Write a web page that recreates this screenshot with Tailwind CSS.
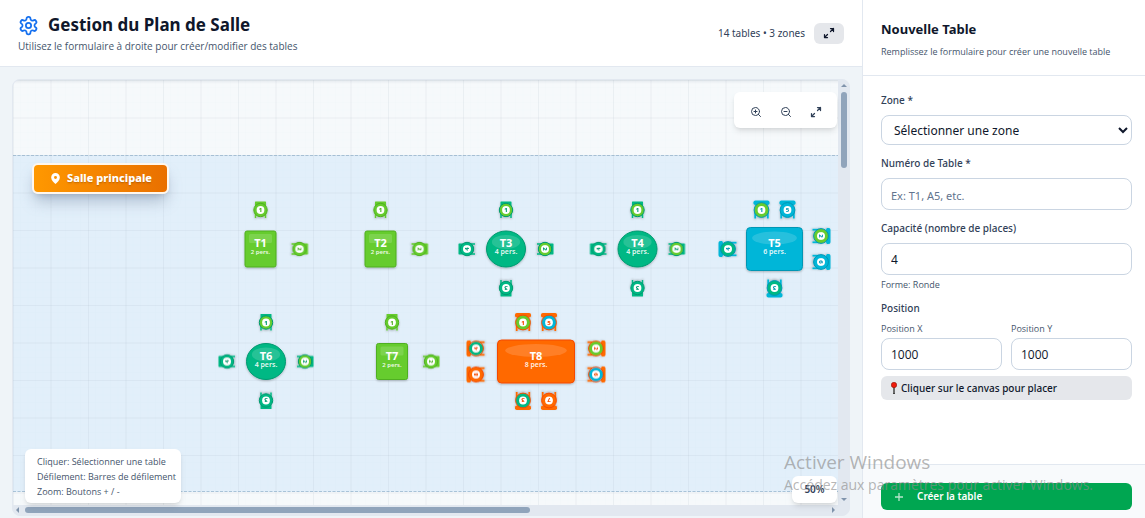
<!DOCTYPE html>
<html lang="fr">
<head>
<meta charset="utf-8">
<meta name="viewport" content="width=device-width, initial-scale=1">
<title>Gestion du Plan de Salle</title>
<script src="https://cdn.jsdelivr.net/npm/@tailwindcss/browser@4"></script>
</head>
<body class="h-screen overflow-hidden bg-white font-['Noto_Sans','Open_Sans',sans-serif] text-slate-900">
<div class="flex h-full">
  <main class="flex min-w-0 flex-1 flex-col bg-[#eff4f8]">
    <header class="flex h-[67px] shrink-0 items-center justify-between border-b border-slate-200 bg-white pr-[18px] pl-[18px]">
      <div class="pt-[2px]">
        <h1 class="flex items-center gap-[9px] text-[17px] leading-6 font-bold">
          <svg class="size-[21px] text-[#1570ef]" viewBox="0 0 24 24" fill="none" stroke="currentColor" stroke-width="2" stroke-linecap="round" stroke-linejoin="round"><path d="M12.22 2h-.44a2 2 0 0 0-2 2v.18a2 2 0 0 1-1 1.73l-.43.25a2 2 0 0 1-2 0l-.15-.08a2 2 0 0 0-2.73.73l-.22.38a2 2 0 0 0 .73 2.73l.15.1a2 2 0 0 1 1 1.72v.51a2 2 0 0 1-1 1.74l-.15.09a2 2 0 0 0-.73 2.73l.22.38a2 2 0 0 0 2.73.73l.15-.08a2 2 0 0 1 2 0l.43.25a2 2 0 0 1 1 1.73V20a2 2 0 0 0 2 2h.44a2 2 0 0 0 2-2v-.18a2 2 0 0 1 1-1.73l.43-.25a2 2 0 0 1 2 0l.15.08a2 2 0 0 0 2.73-.73l.22-.39a2 2 0 0 0-.73-2.73l-.15-.08a2 2 0 0 1-1-1.74v-.5a2 2 0 0 1 1-1.74l.15-.09a2 2 0 0 0 .73-2.73l-.22-.38a2 2 0 0 0-2.73-.73l-.15.08a2 2 0 0 1-2 0l-.43-.25a2 2 0 0 1-1-1.73V4a2 2 0 0 0-2-2z"/><circle cx="12" cy="12" r="3"/></svg>
          Gestion du Plan de Salle
        </h1>
        <p class="font-['Open_Sans',sans-serif] text-[10px] leading-[18px] text-slate-600">Utilisez le formulaire à droite pour créer/modifier des tables</p>
      </div>
      <div class="flex items-center gap-[9px]">
        <span class="text-[10px] text-slate-700">14 tables • 3 zones</span>
        <button type="button" aria-label="Plein écran" class="flex h-[21px] w-[30px] items-center justify-center rounded-md bg-gray-200">
          <svg class="size-3" viewBox="0 0 24 24" fill="none" stroke="currentColor" stroke-width="2.500" stroke-linecap="round" stroke-linejoin="round"><path d="m15 9 6-6M15 3h6v6M9 15l-6 6M9 21H3v-6"/></svg>
        </button>
      </div>
    </header>

    <div class="flex min-h-0 flex-1 flex-col pt-3 pr-3 pb-[2px] pl-3">
      <section class="relative grid min-h-0 flex-1 grid-cols-[minmax(0,1fr)_11px] grid-rows-[minmax(0,1fr)_10px] overflow-hidden rounded-lg border border-slate-200 bg-slate-200">
        <div class="relative overflow-hidden bg-[#f6f9fb]">
          <svg class="absolute top-0 left-0 h-[900px] w-[2400px] font-bold" aria-label="Plan de salle">
            <defs>
              <pattern id="grid" width="75" height="75" patternUnits="userSpaceOnUse">
                <path d="M7.5 0V75M15 0V75M22.500 0V75M30 0V75M45 0V75M52.500 0V75M60 0V75M67.500 0V75M0 7.500H75M0 15H75M0 22.500H75M0 30H75M0 45H75M0 52.500H75M0 60H75M0 67.500H75" stroke="#94a3b8" stroke-opacity=".03" stroke-width=".5"/>
                <path d="M.5 0V75M38 0V75M0 .5H75M0 38H75" stroke="#94a3b8" stroke-opacity=".12"/>
              </pattern>
              <linearGradient id="top" x2="0" y2="1"><stop stop-color="#64748b" stop-opacity=".12"/><stop offset="1" stop-color="#64748b" stop-opacity="0"/></linearGradient>
              <filter id="soft" x="-30%" y="-30%" width="160%" height="170%"><feDropShadow dx="0" dy="1" stdDeviation="1" flood-color="#000" flood-opacity=".25"/></filter>
              <g id="chair">
                <path d="M-5 2V8M5 2V8" stroke="currentColor" stroke-width="1.500"/>
                <rect x="-5.500" y="-8.500" width="11" height="4.500" rx=".5" fill="currentColor"/>
              </g>
              <g id="armchair">
                <path d="M-6.300 2V8.500M6.300 2V8.500" stroke="currentColor" stroke-width="1.800"/>
                <rect x="-8" y="-9.500" width="16" height="4.500" rx="1.800" fill="currentColor"/>
              </g>
            </defs>
            <rect y="75" width="2400" height="337" fill="#e2effa"/>
            <path d="M0 75.500H2400M0 411.500H2400" stroke="#a9c3d8" stroke-dasharray="3 1.500"/>
            <rect width="2400" height="900" fill="url(#grid)"/>
            <rect width="2400" height="4" fill="url(#top)"/>
            <g id="plan" transform="translate(-13 -80)" text-anchor="middle"></g>
          </svg>
          <div class="absolute top-[83px] left-[19px] flex h-[31px] items-center gap-[5px] rounded-md border-2 border-orange-50 bg-linear-to-r from-[#ff9800] to-[#e97000] px-[15px] text-[11px] font-extrabold text-white shadow-lg shadow-slate-500/40 text-shadow-sm">
            <svg class="size-[13px]" viewBox="0 0 24 24" fill="currentColor"><path fill-rule="evenodd" d="M12 2a8 8 0 0 0-8 8c0 5 5 9.500 8 12 3-2.500 8-7 8-12a8 8 0 0 0-8-8Zm0 5.500a2.700 2.700 0 1 1 0 5.400 2.700 2.700 0 0 1 0-5.400Z"/></svg>
            Salle principale
          </div>
        </div>
        <div class="flex flex-col items-center justify-between py-1">
          <i class="border-x-3 border-b-3 border-x-transparent border-b-[#8094ac]"></i>
          <i class="mt-[5px] h-[76px] w-[6px] rounded-full bg-[#90a4bb]"></i>
          <i class="mt-auto border-x-3 border-t-3 border-x-transparent border-t-[#8094ac]"></i>
        </div>
        <div class="flex items-center px-[3px]">
          <i class="border-y-3 border-r-3 border-y-transparent border-r-[#8094ac]"></i>
          <i class="ml-[6px] h-[6px] w-[505px] rounded-full bg-[#90a4bb]"></i>
          <i class="ml-auto border-y-3 border-l-3 border-y-transparent border-l-[#8094ac]"></i>
        </div>
        <div></div>

        <div class="absolute top-3 right-3 flex h-9 items-center gap-[3px] rounded-md bg-white px-2 pt-1 text-slate-700 shadow-md">
          <button type="button" aria-label="Zoom avant" class="flex h-6 w-[27px] items-center justify-center"><svg class="size-3" viewBox="0 0 24 24" fill="none" stroke="currentColor" stroke-width="2" stroke-linecap="round"><circle cx="11" cy="11" r="8"/><path d="m21 21-4.300-4.300M11 8v6M8 11h6"/></svg></button>
          <button type="button" aria-label="Zoom arrière" class="flex h-6 w-[27px] items-center justify-center"><svg class="size-3" viewBox="0 0 24 24" fill="none" stroke="currentColor" stroke-width="2" stroke-linecap="round"><circle cx="11" cy="11" r="8"/><path d="m21 21-4.300-4.300M8 11h6"/></svg></button>
          <button type="button" aria-label="Ajuster" class="flex h-6 w-[27px] items-center justify-center"><svg class="size-3" viewBox="0 0 24 24" fill="none" stroke="currentColor" stroke-width="2.500" stroke-linecap="round" stroke-linejoin="round"><path d="m15 9 6-6M15 3h6v6M9 15l-6 6M9 21H3v-6"/></svg></button>
        </div>
        <div class="absolute bottom-3 left-3 rounded-md bg-white pt-[5px] pr-[5px] pb-1 pl-3 font-['Open_Sans',sans-serif] text-[9px] leading-[15px] text-slate-600 shadow-md">
          <p><span class="font-medium">Cliquer:</span> Sélectionner une table</p>
          <p><span class="font-medium">Défilement:</span> Barres de défilement</p>
          <p><span class="font-medium">Zoom:</span> Boutons + / -</p>
        </div>
        <div class="absolute right-3 bottom-3 flex h-[27px] w-[45px] items-center justify-center rounded-md bg-white text-[10px] font-semibold text-slate-700 shadow-md">50%</div>
      </section>
    </div>
  </main>

  <aside class="flex w-[283px] shrink-0 flex-col border-l border-slate-200">
    <div class="h-[76px] border-b border-slate-200 pt-[17px] pl-[18px]">
      <h2 class="text-[13px] leading-6 font-bold">Nouvelle Table</h2>
      <p class="pt-[2px] font-['Open_Sans',sans-serif] text-[9px] leading-[18px] text-slate-600">Remplissez le formulaire pour créer une nouvelle table</p>
    </div>
    <form id="table-form" class="flex-1 pt-[17px] pr-[13px] pl-[18px]">
      <label for="zone" class="block pb-[7px] text-[10px] leading-[15px] font-medium text-slate-700">Zone *</label>
      <select id="zone" class="block h-[30px] w-full rounded-lg border border-slate-300 bg-white px-2 text-[12px]"><option>Sélectionner une zone</option></select>
      <label for="num" class="mt-[11px] block pb-[7px] text-[10px] leading-[15px] font-medium text-slate-700">Numéro de Table *</label>
      <input id="num" type="text" placeholder="Ex: T1, A5, etc." class="block h-8 w-full rounded-lg border border-slate-300 px-[9px] pt-[2px] text-[11px] placeholder:text-slate-500">
      <label for="cap" class="mt-[11px] block pb-[7px] text-[10px] leading-[15px] font-medium text-slate-700">Capacité (nombre de places)</label>
      <input id="cap" type="text" inputmode="numeric" value="4" class="block h-8 w-full rounded-lg border border-slate-300 px-[9px] text-[12px]">
      <p class="pt-[3px] font-['Open_Sans',sans-serif] text-[9px] leading-[14px] text-slate-600">Forme: Ronde</p>
      <fieldset>
        <legend class="pt-[9px] text-[10px] leading-[15px] font-medium text-slate-700">Position</legend>
        <div class="grid grid-cols-2 gap-[9px] pt-[6px] font-['Open_Sans',sans-serif]">
          <div><label for="px" class="block pb-[2px] text-[9px] leading-[14px] text-slate-600">Position X</label><input id="px" type="text" inputmode="numeric" value="1000" class="block h-8 w-full rounded-lg border border-slate-300 px-[9px] text-[12px]"></div>
          <div><label for="py" class="block pb-[2px] text-[9px] leading-[14px] text-slate-600">Position Y</label><input id="py" type="text" inputmode="numeric" value="1000" class="block h-8 w-full rounded-lg border border-slate-300 px-[9px] text-[12px]"></div>
        </div>
      </fieldset>
      <button type="button" class="mt-[6px] flex h-6 w-full items-center gap-1 rounded-md bg-gray-200 px-[10px] text-[10px] font-medium">
        <svg class="h-3 w-[6px]" viewBox="0 0 6 12"><path d="M3 4v8" stroke="#444" stroke-width="2"/><path d="M3 5v6" stroke="#aaa" stroke-width=".8"/><circle cx="3" cy="3" r="2.700" fill="#f01c0c" stroke="#8c1a10" stroke-width=".6"/></svg>
        Cliquer sur le canvas pour placer
      </button>
    </form>
    <footer class="h-[54px] shrink-0 border-t border-slate-200 bg-slate-50 pt-[18px] pr-[13px] pl-[18px]">
      <button type="submit" form="table-form" class="flex h-[27px] w-full items-center gap-3 rounded-md bg-[#00a651] px-3 text-[10px] font-semibold text-white">
        <svg class="size-3" viewBox="0 0 12 12" stroke="#b7e5cc" stroke-width="1.300"><path d="M2 6h8M6 2v8"/></svg>
        Créer la table
      </button>
    </footer>
  </aside>
</div>
<div class="pointer-events-none absolute right-12 bottom-[22px] w-[313px] font-['Open_Sans',sans-serif] whitespace-nowrap text-[#8c8c8c]/65">
  <p class="text-[19px] leading-6">Activer Windows</p>
  <p class="text-[14px] leading-[22px]">Accédez aux paramètres pour activer Windows.</p>
</div>
<script>
const LIME = '#66cc2e', GREEN = '#00b884', CYAN = '#00b6d8', ORANGE = '#ff6900';
const edges = { [LIME]: '#4faf20', [GREEN]: '#009970', [CYAN]: '#0096b4', [ORANGE]: '#f54a00' };
const rings = [LIME, LIME, GREEN, GREEN, CYAN, CYAN, ORANGE, ORANGE];
const tables = [
  { n: 'T1', x: 260.5, y: 249, c: LIME, w: 31, h: 36, p: 2 },
  { n: 'T2', x: 380.5, y: 249, c: LIME, w: 31, h: 36, p: 2 },
  { n: 'T3', x: 506, y: 249, c: GREEN, w: 39, h: 36, p: 4 },
  { n: 'T4', x: 637.5, y: 249, c: GREEN, w: 39, h: 36, p: 4 },
  { n: 'T5', x: 774.5, y: 249, c: CYAN, w: 56, h: 43, p: 6 },
  { n: 'T6', x: 266, y: 361.5, c: GREEN, w: 39, h: 36, p: 4 },
  { n: 'T7', x: 392, y: 361.5, c: LIME, w: 31, h: 36, p: 2 },
  { n: 'T8', x: 536, y: 361.5, c: ORANGE, w: 77, h: 43, p: 8 }
];
const seats = t => {
  const h = 39, s = t.p === 8 ? 60 : t.p === 6 ? 46.5 : 39, d = 13;
  if (t.p === 2) return [[0, -h, 0, 1], [h, 0, 90, 2]];
  if (t.p === 4) return [[0, -h, 0, 1], [h, 0, 90, 2], [0, h, 180, 3], [-h, 0, 270, 4]];
  const base = [[-d, -h, 0, 1], [d, -h, 0, 5], [s, -d, 90, 2], [s, d, 90, 6]];
  return t.p === 6 ? [...base, [0, h, 180, 3], [-s, 0, 270, 4]]
    : [...base, [-d, h, 180, 3], [d, h, 180, 7], [-s, -d, 270, 4], [-s, d, 270, 8]];
};
document.getElementById('plan').innerHTML = tables.map(t => {
  const big = t.p > 4, e = edges[t.c];
  const chairs = seats(t).map(([dx, dy, r, n]) => `<g transform="translate(${t.x + dx} ${t.y + dy}) rotate(${r})" color="${t.c}" filter="url(#soft)">
    <use href="#${big ? 'armchair' : 'chair'}"/><circle r="${big ? 7.4 : 6.7}" fill="${rings[n - 1]}" stroke="${e}"/><circle r="3.9" fill="#fff"/>
    <text y="2.200" font-size="6" font-weight="800" fill="${e}">${n}</text></g>`).join('');
  const top = t.p === 4
    ? `<ellipse cx="${t.x}" cy="${t.y}" rx="${t.w / 2}" ry="${t.h / 2}" fill="${t.c}" stroke="${e}" filter="url(#soft)"/>`
    : `<rect x="${t.x - t.w / 2}" y="${t.y - t.h / 2}" width="${t.w}" height="${t.h}" rx="${big ? 4 : 2}" fill="${t.c}" stroke="${e}" filter="url(#soft)"/>`;
  const shine = t.p === 2
    ? `<rect x="${t.x - 11.5}" y="${t.y - 15}" width="23" height="9" rx="1.500" fill="#fff" fill-opacity=".15"/>`
    : `<ellipse cx="${t.x}" cy="${t.y - (big ? 11 : 7)}" rx="${t.w * 0.4 - (big ? 0 : 1.5)}" ry="${big ? 6.5 : 7}" fill="#fff" fill-opacity=".15"/>`;
  return `<g>${chairs}${top}${shine}<text x="${t.x}" y="${t.y - 2}" font-size="11" fill="#fff">${t.n}</text>
    <text x="${t.x}" y="${t.y + 5}" font-size="${t.p === 2 ? 6 : 7}" font-weight="600" fill="#fff" fill-opacity=".9">${t.p} pers.</text></g>`;
}).join('');
</script>
</body>
</html>
